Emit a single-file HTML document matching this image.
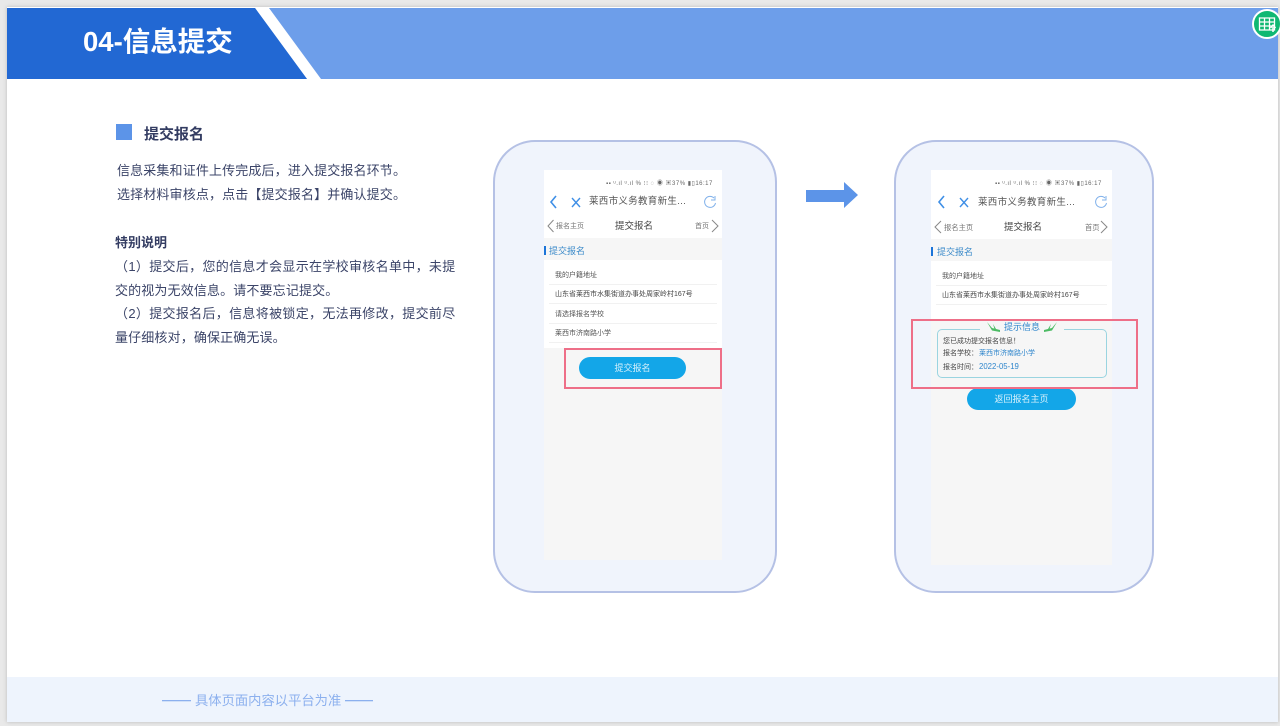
<!DOCTYPE html>
<html lang="zh">
<head>
<meta charset="utf-8">
<style>
*{box-sizing:border-box}
html,body{margin:0;padding:0;width:1280px;height:726px;overflow:hidden;background:#e9e9e9;font-family:"Liberation Sans","Noto Sans CJK SC",sans-serif}
.a{position:absolute;white-space:nowrap;line-height:1}
#slide{position:absolute;left:7px;top:7px;width:1271px;height:715px;background:#fff;overflow:hidden;box-shadow:0 0 4px #bbb}
.b{color:#3b4468;font-size:13px;filter:blur(.25px)}
.phone{position:absolute;top:140px;height:453px;background:#f0f4fc;border:2px solid #b5c1e5;border-radius:42px}
.screen{position:absolute;background:#f6f6f6;filter:blur(.35px)}
.w{position:absolute;background:#fff;left:0;right:0}
.g{color:#555}
.red{position:absolute;border:2px solid #ee6f88;filter:blur(.3px)}
.btn{position:absolute;background:#13a6e8;color:#d7f1fc;border-radius:12px;text-align:center;font-size:9px}
.ln{position:absolute;height:1px;background:#f1f1f1}
.st{font-size:6px;color:#666;letter-spacing:.5px}
</style>
</head>
<body>
<div id="slide"></div>
<svg class="a" style="left:0;top:0" width="1280" height="726">
<rect x="7" y="8" width="1271" height="71" fill="#6d9eea"/>
<polygon points="255,8 269,8 321,79 307,79" fill="#fff"/>
<polygon points="7,8 255,8 307,79 7,79" fill="#2268d3"/>
<rect x="7" y="677" width="1271" height="45" fill="#eef4fd"/>
<rect x="116" y="124" width="16" height="16" fill="#5c94e8"/>
<polygon points="806,190 844,190 844,182 858,195 844,208 844,202 806,202" fill="#5c94e8"/>
<rect x="162" y="700" width="29" height="1.300" fill="#8cb0ee"/>
<rect x="345" y="700" width="28" height="1.300" fill="#8cb0ee"/>
</svg>
<div class="a" style="left:83px;top:28px;font-size:27.500px;font-weight:bold;color:#fff">04-信息提交</div>
<svg class="a" style="left:1252px;top:9px" width="30" height="32">
<circle cx="15" cy="15" r="14" fill="#10b873" stroke="#fff" stroke-width="2"/>
<path d="M7.500 9h15v12h-15zM7.500 13h15M7.500 17h15M12.500 9v12M17.500 9v12" fill="none" stroke="#fff" stroke-width="1.300"/>
<path d="M21 23v-5M18.500 19l2.500-3 2.500 3" fill="none" stroke="#fff" stroke-width="1.500"/>
</svg>

<div class="a" style="left:144px;top:127px;font-size:15px;font-weight:bold;color:#333c62">提交报名</div>
<div class="a b" style="left:117px;top:164px;letter-spacing:.14px">信息采集和证件上传完成后，进入提交报名环节。</div>
<div class="a b" style="left:117px;top:188px;letter-spacing:.14px">选择材料审核点，点击【提交报名】并确认提交。</div>
<div class="a" style="left:115px;top:236px;font-size:13px;font-weight:bold;color:#333c62">特别说明</div>
<div class="a b" style="left:115px;top:260px;letter-spacing:.32px">（1）提交后，您的信息才会显示在学校审核名单中，未提</div>
<div class="a b" style="left:115px;top:284px;letter-spacing:.14px">交的视为无效信息。请不要忘记提交。</div>
<div class="a b" style="left:115px;top:307px;letter-spacing:.32px">（2）提交报名后，信息将被锁定，无法再修改，提交前尽</div>
<div class="a b" style="left:115px;top:331px;letter-spacing:.14px">量仔细核对，确保正确无误。</div>

<div class="phone" style="left:493px;width:284px"></div>
<div class="screen" style="left:544px;top:170px;width:178px;height:390px">
  <div class="w" style="top:0;height:68px"></div>
  <div class="a st" style="left:62px;top:11px">▪▪ ᵘ.ıl ᵘ.ıl % ⁝⁝ ◌ ◉ ▣37% ▮▯16:17</div>
  <svg class="a" style="left:0;top:20px" width="178" height="48" fill="none">
    <path d="M12 6l-5 6 5 6" stroke="#3f8fe6" stroke-width="1.600"/>
    <path d="M28 8l8 9M36 8l-8 9" stroke="#3f8fe6" stroke-width="1.400"/>
    <path d="M170 8a5.500 5.500 0 1 0 1.500 5M171 6v4h-4" stroke="#7fb0ea" stroke-width="1"/>
    <path d="M9.500 30l-5.500 6 5.500 6" stroke="#888" stroke-width="1"/>
    <path d="M168 30l6 6-6 6" stroke="#888" stroke-width="1"/>
  </svg>
  <div class="a g" style="left:45px;top:27px;font-size:9.500px;letter-spacing:.3px">莱西市义务教育新生...</div>
  <div class="a" style="left:12px;top:53px;font-size:7px;color:#777">报名主页</div>
  <div class="a" style="left:71px;top:52px;font-size:9.500px;color:#444">提交报名</div>
  <div class="a" style="left:151px;top:53px;font-size:7px;color:#777">首页</div>
  <div class="a" style="left:0;top:76px;width:2px;height:9px;background:#1b74d8"></div>
  <div class="a" style="left:5px;top:77px;font-size:9px;color:#3b8ac9">提交报名</div>
  <div class="w" style="top:90px;height:88px"></div>
  <div class="a g" style="left:11px;top:102px;font-size:7px">我的户籍地址</div>
  <div class="ln" style="left:5px;top:114px;width:168px"></div>
  <div class="a" style="left:11px;top:121px;font-size:7px;color:#444">山东省莱西市水集街道办事处周家岭村167号</div>
  <div class="ln" style="left:5px;top:133px;width:168px"></div>
  <div class="a g" style="left:11px;top:141px;font-size:7px">请选择报名学校</div>
  <div class="ln" style="left:5px;top:153px;width:168px"></div>
  <div class="a g" style="left:11px;top:160px;font-size:7px">莱西市济南路小学</div>
  <div class="ln" style="left:5px;top:172px;width:168px"></div>
  <div class="btn" style="left:35px;top:187px;width:107px;height:22px;line-height:22px">提交报名</div>
</div>
<div class="red" style="left:564px;top:348px;width:158px;height:41px"></div>

<div class="phone" style="left:894px;width:260px"></div>
<div class="screen" style="left:931px;top:170px;width:181px;height:395px">
  <div class="w" style="top:0;height:69px"></div>
  <div class="a st" style="left:64px;top:11px">▪▪ ᵘ.ıl ᵘ.ıl % ⁝⁝ ◌ ◉ ▣37% ▮▯16:17</div>
  <svg class="a" style="left:0;top:20px" width="181" height="48" fill="none">
    <path d="M13 6l-5 6 5 6" stroke="#3f8fe6" stroke-width="1.600"/>
    <path d="M29 8l8 9M37 8l-8 9" stroke="#3f8fe6" stroke-width="1.400"/>
    <path d="M174 8a5.500 5.500 0 1 0 1.500 5M175 6v4h-4" stroke="#7fb0ea" stroke-width="1"/>
    <path d="M10 31l-6 6 6 6" stroke="#888" stroke-width="1"/>
    <path d="M170 31l6 6-6 6" stroke="#888" stroke-width="1"/>
  </svg>
  <div class="a g" style="left:47px;top:28px;font-size:9.500px;letter-spacing:.3px">莱西市义务教育新生...</div>
  <div class="a" style="left:13px;top:54px;font-size:7.300px;color:#777">报名主页</div>
  <div class="a" style="left:73px;top:53px;font-size:9.500px;color:#444">提交报名</div>
  <div class="a" style="left:154px;top:54px;font-size:7.300px;color:#777">首页</div>
  <div class="a" style="left:0;top:77px;width:2px;height:9px;background:#1b74d8"></div>
  <div class="a" style="left:6px;top:78px;font-size:9px;color:#3b8ac9">提交报名</div>
  <div class="w" style="top:91px;height:60px"></div>
  <div class="a g" style="left:11px;top:103px;font-size:7px">我的户籍地址</div>
  <div class="ln" style="left:5px;top:115px;width:171px"></div>
  <div class="a" style="left:11px;top:122px;font-size:7px;color:#444">山东省莱西市水集街道办事处周家岭村167号</div>
  <div class="ln" style="left:5px;top:134px;width:171px"></div>
  <div style="position:absolute;left:6px;top:159px;width:170px;height:49px;border:1px solid #9ad4e0;border-radius:5px"></div>
  <div class="a" style="left:49px;top:152px;width:84px;height:10px;background:#f6f6f6"></div>
  <svg class="a" style="left:54px;top:151px" width="74" height="12">
    <path d="M2 1L7 7L15 9L15 11L7 9.500ZM8 3L11 8L9.500 8Z" fill="#4cbb64"/>
    <path d="M72 1L67 7L59 9L59 11L67 9.500ZM66 3L63 8L64.500 8Z" fill="#4cbb64"/>
  </svg>
  <div class="a" style="left:73px;top:153px;font-size:9px;color:#2f86cc">提示信息</div>
  <div class="a" style="left:12px;top:168px;font-size:7px;color:#444">您已成功提交报名信息！</div>
  <div class="a" style="left:12px;top:180px;font-size:7px;color:#444">报名学校：<span style="color:#2f86cc;margin-left:1px">莱西市济南路小学</span></div>
  <div class="a" style="left:12px;top:193px;font-size:7px;color:#444">报名时间：<span style="color:#2f86cc;margin-left:1px;font-size:7.800px">2022-05-19</span></div>
  <div class="btn" style="left:36px;top:218px;width:109px;height:22px;line-height:22px">返回报名主页</div>
</div>
<div class="red" style="left:911px;top:319px;width:227px;height:70px"></div>

<div class="a" style="left:195px;top:694px;font-size:13.300px;color:#8cb0ee">具体页面内容以平台为准</div>
</body>
</html>
